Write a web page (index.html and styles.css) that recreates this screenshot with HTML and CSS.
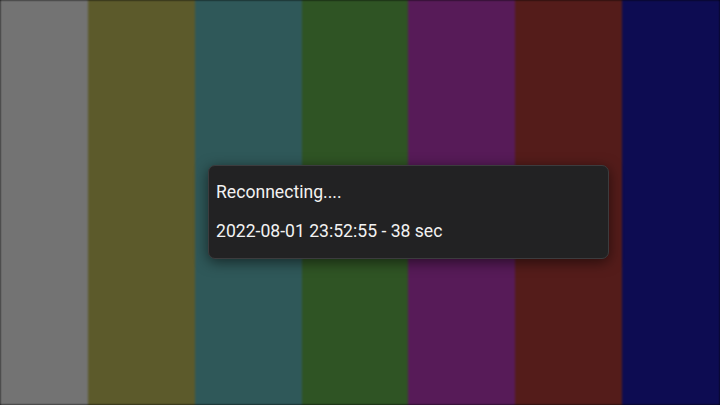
FILE: index.html
```html
<!DOCTYPE html>
<html lang="en">
<head>
    <meta charset="UTF-8">
    <meta name="viewport" content="width=device-width, initial-scale=1.0">
    <title>Reconnecting</title>
    <link rel="stylesheet" href="styles.css">
</head>
<body>
    <div class="bars">
        <div class="bar gray"></div>
        <div class="bar olive"></div>
        <div class="bar teal"></div>
        <div class="bar green"></div>
        <div class="bar purple"></div>
        <div class="bar red"></div>
        <div class="bar navy"></div>
    </div>

    <div class="dialog">
        <p class="status">Reconnecting....</p>
        <p class="stamp">2022-08-01 23:52:55 - 38 sec</p>
    </div>
</body>
</html>
```

FILE: styles.css
```css
html, body {
    margin: 0;
    height: 100%;
    overflow: hidden;
}

body {
    font-family: Roboto, "Noto Sans", sans-serif;
    background-color: #000;
    position: relative;
}

.bars {
    display: grid;
    grid-template-columns: 88px repeat(5, 1fr) 98px;
    height: 100%;
    filter: blur(0.8px);
}

.gray   { background-color: #737373; }
.olive  { background-color: #5c5a2b; }
.teal   { background-color: #2f5859; }
.green  { background-color: #2f5424; }
.purple { background-color: #571b58; }
.red    { background-color: #541c1a; }
.navy   { background-color: #0d0c52; }

.dialog {
    box-sizing: border-box;
    position: absolute;
    left: 208px;
    top: 165px;
    width: 401px;
    height: 94px;
    background-color: #222223;
    border: 1px solid #3c3c3e;
    border-radius: 7px;
    box-shadow: 0 3px 14px rgba(0, 0, 0, 0.55);
    color: #f2f2f2;
    font-size: 17.6px;
    padding: 0 7px;
}

.dialog p {
    margin: 0;
    line-height: 20px;
}

.status {
    padding-top: 16px;
}

.stamp {
    padding-top: 19px;
}
```
